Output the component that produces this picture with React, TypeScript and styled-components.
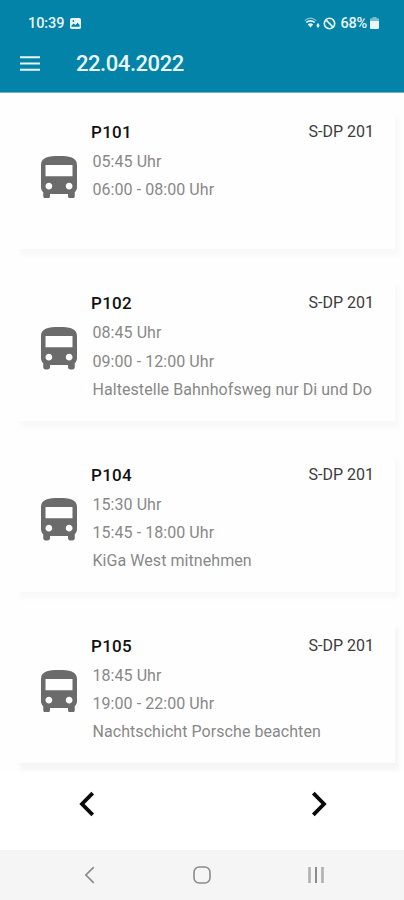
import React from 'react';
import styled, { createGlobalStyle } from 'styled-components';

const GlobalStyle = createGlobalStyle`
  * { box-sizing: border-box; }
  body { margin: 0; background: #fff; font-family: Roboto, "Liberation Sans", sans-serif; }
`;

const Screen = styled.div`
  width: 404px;
  height: 900px;
  display: flex;
  flex-direction: column;
  overflow: hidden;
  background: #fefefe;
`;

const Header = styled.header`
  height: 93px;
  flex: none;
  background: #0383a8;
  border-bottom: 1px solid #6bb3ca;
  color: #e9f6fa;
`;

const StatusBar = styled.div`
  height: 46px;
  padding: 0 25px 0 28px;
  display: flex;
  align-items: center;
  justify-content: space-between;
  font-size: 14.5px;
  font-weight: 500;
  line-height: 46px;
`;

const StatusGroup = styled.div<{ $gap: number }>`
  display: flex;
  align-items: center;
  gap: ${(p) => p.$gap}px;
`;

const Clock = styled.span`
  letter-spacing: -0.1px;
  line-height: 49px;
`;

const Percent = styled.span`
  margin-left: 1px;
  letter-spacing: -0.2px;
  line-height: 49px;
`;

const Toolbar = styled.div`
  height: 36px;
  padding-left: 20px;
  display: flex;
  align-items: center;
`;

const Title = styled.h1`
  margin: 0 0 0 36px;
  font-size: 22px;
  font-weight: 500;
  line-height: 36px;
  letter-spacing: -0.45px;
`;

const PlainButton = styled.button`
  padding: 0;
  border: 0;
  background: none;
  color: inherit;
  display: flex;
`;

const MenuButton = styled(PlainButton)`
  margin-top: -2px;
`;

const List = styled.main`
  flex: 1;
  min-height: 0;
  padding: 13px 9px 9px 14px;
  display: flex;
  flex-direction: column;
  gap: 28px;
  overflow: hidden;
`;

const Card = styled.article`
  flex: 1;
  padding: 14px 22px 0 27px;
  display: flex;
  background: #fefefe;
  box-shadow: 5px 8px 5px -1px rgba(0, 0, 0, 0.024);

  &:last-child {
    box-shadow: 5px 8px 5px -1px rgba(0, 0, 0, 0.04);
  }
`;

const BusSlot = styled.div`
  width: 36px;
  flex: none;
  padding-top: 35.8px;
  color: #6b6b6b;
`;

const Details = styled.div`
  flex: 1;
  min-width: 0;
  margin-left: 14px;
  white-space: nowrap;
`;

const CardHead = styled.div`
  display: flex;
  justify-content: space-between;
  line-height: 24px;
  height: 28px;
`;

const Code = styled.h2`
  margin: 0;
  font-size: 17px;
  font-weight: 500;
  line-height: 24px;
  letter-spacing: 0.3px;
  color: #111;
`;

const Vehicle = styled.span`
  margin-right: -1px;
  font-size: 16px;
  color: #3c3c3c;
`;

const Line = styled.p`
  margin: 0 0 0 1.5px;
  font-size: 16px;
  line-height: 28.3px;
  letter-spacing: 0.06px;
  color: #888;
`;

const Pager = styled.div`
  height: 78px;
  flex: none;
  padding: 19px 76px 0 78px;
  display: flex;
  justify-content: space-between;
  background: #fff;
  color: #0a0a0a;
`;

const SystemNav = styled.nav`
  height: 50px;
  flex: none;
  padding: 0 79px 0 83px;
  display: flex;
  align-items: center;
  justify-content: space-between;
  background: #f5f5f5;
  color: #8b8b8b;
`;

const BusIcon = () => (
  <svg width="36" height="42.5" viewBox="4 2 16 19" fill="currentColor" preserveAspectRatio="none">
    <path d="M4 16c0 .88.39 1.67 1 2.22V20c0 .55.45 1 1 1h1c.55 0 1-.45 1-1v-1h8v1c0 .55.45 1 1 1h1c.55 0 1-.45 1-1v-1.78c.61-.55 1-1.34 1-2.22V6c0-3.5-3.58-4-8-4s-8 .5-8 4v10zm3.5 1c-.83 0-1.5-.67-1.5-1.5S6.67 14 7.5 14s1.5.67 1.5 1.5S8.33 17 7.5 17zm9 0c-.83 0-1.5-.67-1.5-1.5s.67-1.5 1.5-1.5 1.5.67 1.5 1.5-.67 1.5-1.5 1.5zm1.5-6H6V6h12v5z" />
  </svg>
);

const MenuIcon = () => (
  <svg width="20" height="15" viewBox="0 0 20 15" fill="none" stroke="currentColor" strokeWidth="2">
    <path d="M0 1.2h20M0 7.5h20M0 13.8h20" />
  </svg>
);

const PhotoIcon = () => (
  <svg width="11" height="11" viewBox="0 0 11 11">
    <rect width="11" height="11" rx="1.8" fill="currentColor" />
    <path d="M1.5 8.8V7.4L3.6 5.5l1.8 1.6 2.2-2.4 2 2.3v1.8z" fill="#0383a8" />
    <circle cx="3.4" cy="3" r=".9" fill="#0383a8" />
  </svg>
);

const WifiIcon = () => (
  <svg width="16" height="12" viewBox="0 0 16 12" fill="none" stroke="currentColor">
    <path d="M.7 3.6Q6.5-1.3 12.3 3.6" strokeWidth="1.1" opacity=".6" />
    <path d="M2.3 5.4Q6.5 2.2 10.7 5.4" strokeWidth="1.7" />
    <path d="M3.8 7.4Q6.5 5.2 9.2 7.4L6.5 10.4z" fill="currentColor" stroke="none" />
    <path d="m14 5.8 1.6 2.7L14 11.2l-1.6-2.7z" fill="currentColor" stroke="none" />
  </svg>
);

const BlockIcon = () => (
  <svg width="13" height="13" viewBox="0 0 13 13" fill="none" stroke="currentColor" strokeWidth="1.6">
    <circle cx="6.5" cy="6.5" r="5.2" />
    <path d="m2.9 2.9 7.2 7.2" />
  </svg>
);

const BatteryIcon = () => (
  <svg width="9" height="12" viewBox="0 0 9 12" fill="currentColor">
    <path d="M2.5 0h4v1.3H8q1 0 1 1V4H0V2.3q0-1 1-1h1.5z" opacity=".5" />
    <path d="M0 4h9v7q0 1-1 1H1q-1 0-1-1z" />
  </svg>
);

const PagerArrow = ({ next = false }: { next?: boolean }) => (
  <svg width="17" height="26" viewBox="0 0 17 26" fill="none" stroke="currentColor" strokeWidth="3.8">
    <path d={next ? 'M2.3 2.2 13 13 2.3 23.8' : 'M14.7 2.2 4 13l10.7 10.8'} />
  </svg>
);

const BackIcon = () => (
  <svg width="13" height="18" viewBox="0 0 13 18" fill="none" stroke="currentColor" strokeWidth="1.7">
    <path d="M10.7 1.2 2.9 9l7.8 7.8" />
  </svg>
);

const HomeIcon = () => (
  <svg width="18" height="18" viewBox="0 0 18 18" fill="none" stroke="currentColor" strokeWidth="1.6">
    <rect x="1" y="1" width="16" height="16" rx="5.2" />
  </svg>
);

const RecentsIcon = () => (
  <svg width="18" height="16" viewBox="0 0 18 16" fill="none" stroke="currentColor" strokeWidth="2">
    <path d="M2.5 0v16M15.5 0v16" strokeWidth="2.6" opacity=".65" />
    <path d="M9 0v16" />
  </svg>
);

const trips = [
  { code: 'P101', lines: ['05:45 Uhr', '06:00 - 08:00 Uhr'] },
  { code: 'P102', lines: ['08:45 Uhr', '09:00 - 12:00 Uhr', 'Haltestelle Bahnhofsweg nur Di und Do'] },
  { code: 'P104', lines: ['15:30 Uhr', '15:45 - 18:00 Uhr', 'KiGa West mitnehmen'] },
  { code: 'P105', lines: ['18:45 Uhr', '19:00 - 22:00 Uhr', 'Nachtschicht Porsche beachten'] },
];

export default function App() {
  return (
    <Screen>
      <GlobalStyle />
      <Header>
        <StatusBar>
          <StatusGroup $gap={6}>
            <Clock>10:39</Clock>
            <PhotoIcon />
          </StatusGroup>
          <StatusGroup $gap={3}>
            <WifiIcon />
            <BlockIcon />
            <Percent>68%</Percent>
            <BatteryIcon />
          </StatusGroup>
        </StatusBar>
        <Toolbar>
          <MenuButton aria-label="Menü"><MenuIcon /></MenuButton>
          <Title>22.04.2022</Title>
        </Toolbar>
      </Header>
      <List>
        {trips.map((trip) => (
          <Card key={trip.code}>
            <BusSlot><BusIcon /></BusSlot>
            <Details>
              <CardHead>
                <Code>{trip.code}</Code>
                <Vehicle>S-DP 201</Vehicle>
              </CardHead>
              {trip.lines.map((line) => <Line key={line}>{line}</Line>)}
            </Details>
          </Card>
        ))}
      </List>
      <Pager>
        <PlainButton aria-label="Zurück"><PagerArrow /></PlainButton>
        <PlainButton aria-label="Weiter"><PagerArrow next /></PlainButton>
      </Pager>
      <SystemNav>
        <BackIcon />
        <HomeIcon />
        <RecentsIcon />
      </SystemNav>
    </Screen>
  );
}
